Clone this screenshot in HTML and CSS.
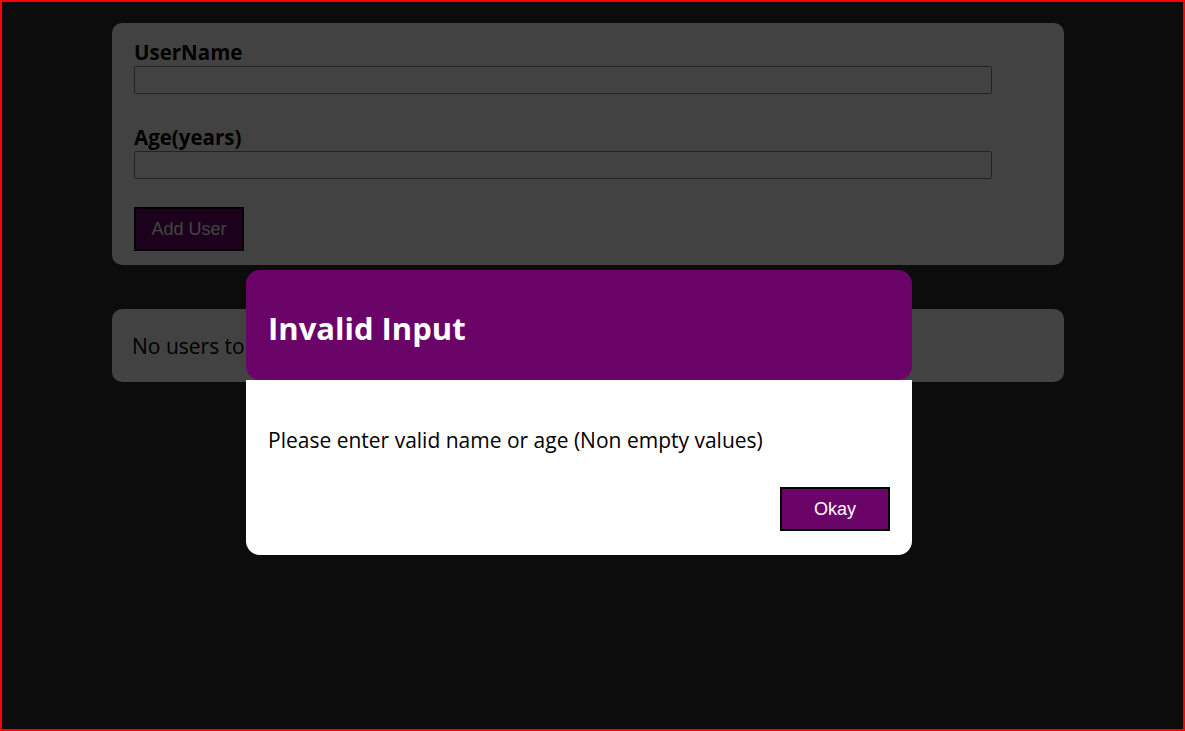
FILE: index.html
```html
<!DOCTYPE html>
<html lang="en">
<head>
<meta charset="utf-8">
<title>Add User</title>
<link rel="stylesheet" href="styles.css">
</head>
<body>
<div class="root">
  <main class="page">
    <section class="card form-card">
      <form class="user-form">
        <label class="field-label" for="username">UserName</label>
        <input class="field-input" id="username" type="text">
        <label class="field-label field-label--spaced" for="age">Age(years)</label>
        <input class="field-input" id="age" type="number">
        <button class="btn btn--add" type="button">Add User</button>
      </form>
    </section>
    <section class="card list-card">
      <p class="empty-text">No users to display</p>
    </section>
  </main>
  <div class="backdrop"></div>
  <div class="modal">
    <header class="modal-header">
      <h2 class="modal-title">Invalid Input</h2>
    </header>
    <div class="modal-body">
      <p class="modal-text">Please enter valid name or age (Non empty values)</p>
      <div class="modal-actions">
        <button class="btn btn--okay" type="button">Okay</button>
      </div>
    </div>
  </div>
</div>
</body>
</html>
```

FILE: styles.css
```css
* { box-sizing: border-box; }

html, body {
  margin: 0;
  padding: 0;
  height: 100%;
}

body {
  font-family: "Open Sans", "Noto Sans", sans-serif;
  background: #2e2e2e;
}

.root {
  position: relative;
  height: 731px;
  border: 2px solid #ff0000;
  background: #2e2e2e;
  overflow: hidden;
}

.page {
  display: flex;
  flex-direction: column;
  gap: 44px;
  padding: 21px 0 0 110px;
}

.card {
  width: 952px;
  background: #ffffff;
  border-radius: 10px;
}

.form-card {
  padding: 16px 22px 14px;
}

.user-form {
  display: flex;
  flex-direction: column;
  align-items: flex-start;
}

.field-label {
  display: block;
  font-size: 20.5px;
  font-weight: 700;
  line-height: 26px;
  color: #000;
  margin-bottom: 1px;
}

.field-label--spaced {
  margin-top: 30px;
}

.field-input {
  width: 858px;
  height: 28px;
  margin: 0;
  border: 1px solid #888;
  border-radius: 2px;
  background: transparent;
  font: inherit;
}

.btn {
  font-family: "Liberation Sans", Arial, sans-serif;
  font-size: 18px;
  color: #ffffff;
  background: #6a0468;
  border: 2px solid #000;
  cursor: pointer;
}

.btn--add {
  margin-top: 28px;
  width: 110px;
  height: 44px;
  padding: 0;
}

.list-card {
  height: 73px;
  display: flex;
  align-items: center;
  padding: 0 20px;
}

.empty-text {
  margin: 0;
  font-size: 21px;
  color: #000;
}

.backdrop {
  position: absolute;
  inset: 0;
  background: rgba(0, 0, 0, 0.74);
}

.modal {
  position: absolute;
  top: 268px;
  left: 244px;
  width: 666px;
  display: flex;
  flex-direction: column;
}

.modal-header {
  height: 110px;
  background: #6a0468;
  border-radius: 14px;
  display: flex;
  align-items: center;
  padding: 6px 22px 0;
}

.modal-title {
  margin: 0;
  color: #fff;
  font-size: 31px;
  font-weight: 700;
  line-height: 36px;
}

.modal-body {
  background: #fff;
  border-radius: 0 0 14px 14px;
  padding: 48px 22px 24px;
}

.modal-text {
  margin: 0;
  font-size: 21px;
  line-height: 24px;
  color: #000;
}

.modal-actions {
  display: flex;
  justify-content: flex-end;
  margin-top: 35px;
}

.btn--okay {
  width: 110px;
  height: 44px;
  padding: 0;
}
```
